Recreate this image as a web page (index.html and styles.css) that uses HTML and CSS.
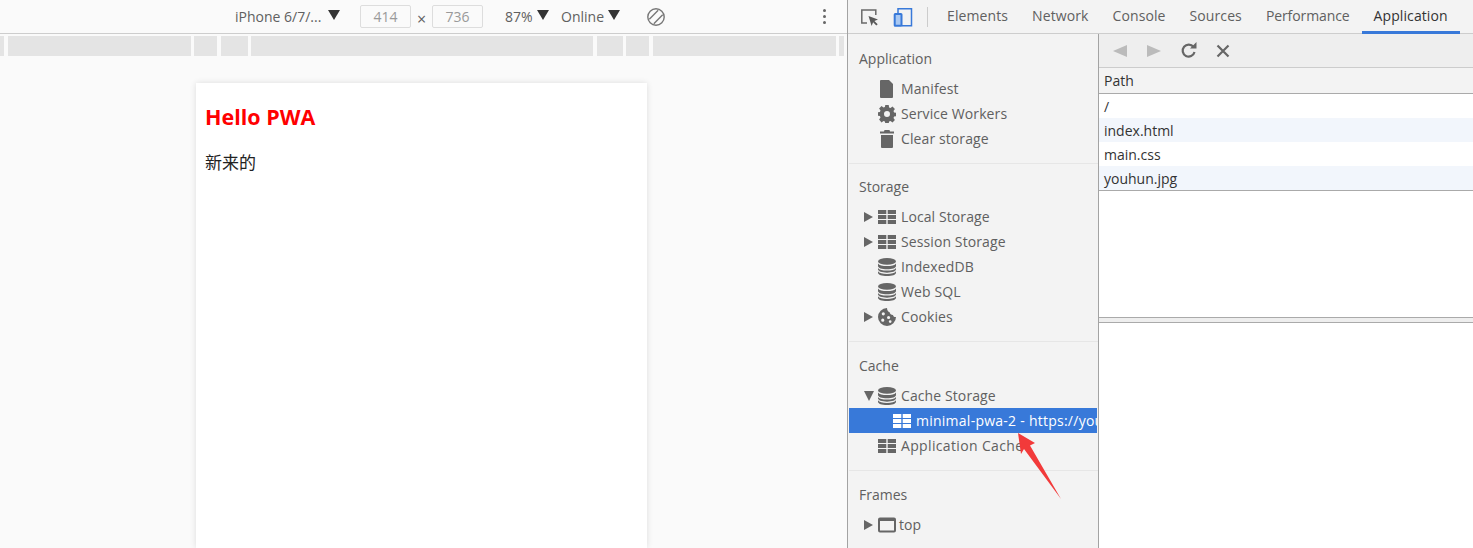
FILE: index.html
```html
<!DOCTYPE html>
<html lang="en">
<head>
    <meta charset="UTF-8">
    <title>Application - DevTools</title>
    <link rel="stylesheet" href="styles.css">
</head>
<body>
    <svg class="sprites" width="0" height="0">
        <symbol id="i-file" viewBox="0 0 18 18"><path d="M3 0h8l4 4v13a1 1 0 0 1-1 1H3a1 1 0 0 1-1-1V1a1 1 0 0 1 1-1z"/></symbol>
        <symbol id="i-gear" viewBox="0 0 18 18"><path fill-rule="evenodd" d="M7.3 0h3.4l.4 2.4 1.4.6 2-1.4 2.4 2.4-1.4 2 .6 1.4 1.9.4v3.4l-1.9.4-.6 1.4 1.4 2-2.4 2.4-2-1.4-1.4.6-.4 1.9H7.3l-.4-1.9-1.4-.6-2 1.4L1.100 14.500l1.4-2-.6-1.400L0 10.700V7.300l1.900-.4.6-1.400-1.400-2 2.400-2.400 2 1.400 1.400-.6zM9 6a3 3 0 1 0 0 6 3 3 0 0 0 0-6z"/></symbol>
        <symbol id="i-trash" viewBox="0 0 18 18"><path d="M6.500 0h5l.5 1.500h4V3.500H2V1.500h4zM3 5h12v12a1 1 0 0 1-1 1H4a1 1 0 0 1-1-1z"/></symbol>
        <symbol id="i-table" viewBox="0 0 18 14"><path d="M0 0h8.300v4H0zM9.700 0H18v4H9.700zM0 5h8.300v4H0zM9.700 5H18v4H9.700zM0 10h8.300v4H0zM9.700 10H18v4H9.700z"/></symbol>
        <symbol id="i-db" viewBox="0 0 16 16"><ellipse cx="8" cy="3" rx="8" ry="3"/><path d="M0 4.800c1 1.700 4 2.400 8 2.400s7-.7 8-2.400V7c0 1.700-3.500 3-8 3S0 8.700 0 7zM0 8.800c1 1.700 4 2.400 8 2.400s7-.7 8-2.400V10c0 1.700-3.500 3-8 3S0 11.700 0 10zM0 11.800C1 13.500 4 14.200 8 14.200s7-.7 8-2.400V13c0 1.700-3.500 3-8 3s-8-1.300-8-3z"/></symbol>
        <symbol id="i-cookie" viewBox="0 0 17 17"><path fill-rule="evenodd" d="M8.500 0a8.500 8.500 0 1 0 8.500 8.500c-1.500.3-2.600-.5-2.800-2C13 6.700 11 5.500 11 4 9.500 3.800 8.500 2 8.500 0zM5 4a1.500 1.500 0 1 1 0 3 1.500 1.500 0 0 1 0-3zm5 3.500a1.500 1.500 0 1 1 0 3 1.500 1.500 0 0 1 0-3zM4.500 10a1.500 1.500 0 1 1 0 3 1.500 1.500 0 0 1 0-3zm7 1.500a1.300 1.300 0 1 1 0 2.600 1.300 1.300 0 0 1 0-2.600z"/></symbol>
        <symbol id="i-frame" viewBox="0 0 18 15"><path fill-rule="evenodd" d="M2 0h14a2 2 0 0 1 2 2v11a2 2 0 0 1-2 2H2a2 2 0 0 1-2-2V2a2 2 0 0 1 2-2zm0 3.500V13h14V3.500z"/></symbol>
    </svg>

    <div class="device-pane">
        <div class="device-toolbar">
            <span class="tb-label tb-device">iPhone 6/7/...</span>
            <span class="tb-arrow"></span>
            <span class="dim-input dim-first">414</span>
            <span class="dim-x">×</span>
            <span class="dim-input">736</span>
            <span class="tb-label tb-zoom">87%</span>
            <span class="tb-arrow"></span>
            <span class="tb-label tb-online">Online</span>
            <span class="tb-arrow"></span>
            <svg class="tb-rotate" width="20" height="20" viewBox="0 0 20 20" fill="none" stroke="#777" stroke-width="1.400">
                <circle cx="10" cy="10" r="8.200"/>
                <path d="M3.300 12.200L12.200 3.300M7.800 16.700L16.700 7.800"/>
            </svg>
            <span class="tb-dots"><i></i><i></i><i></i></span>
        </div>
        <div class="ruler">
            <span class="seg w4"></span>
            <span class="seg w183"></span>
            <span class="seg w23"></span>
            <span class="seg w27"></span>
            <span class="seg w342"></span>
            <span class="seg w26"></span>
            <span class="seg w23"></span>
            <span class="seg w183"></span>
            <span class="seg w5"></span>
        </div>
        <div class="viewport">
            <div class="phone">
                <h1>Hello PWA</h1>
                <p>新来的</p>
            </div>
        </div>
    </div>

    <div class="devtools">
        <div class="tabbar">
            <svg class="ic-inspect" width="19" height="19" viewBox="0 0 19 19">
                <path d="M7 16H1.800V3h14v5" fill="none" stroke="#6a6a6a" stroke-width="1.500"/>
                <path d="M8.500 9l9.500 3.500-3.600 1.500 3.300 3.200-1.400 1.400-3.200-3.300-1.500 3.600z" fill="#5a5a5a"/>
            </svg>
            <svg class="ic-device" width="20" height="21" viewBox="0 0 20 21">
                <path d="M5 7V2.800h13.500v17H9" fill="none" stroke="#3879d9" stroke-width="1.500"/>
                <rect x="1.700" y="8" width="6.800" height="11.800" rx="0.500" fill="#a9c8f2" stroke="#3879d9" stroke-width="2"/>
            </svg>
            <span class="tab-sep"></span>
            <span class="tab">Elements</span>
            <span class="tab">Network</span>
            <span class="tab">Console</span>
            <span class="tab">Sources</span>
            <span class="tab tab-perf">Performance</span>
            <span class="tab active">Application</span>
        </div>
        <div class="panel">
            <div class="sidebar">
                <div class="sec sec-first">
                    <div class="sec-title">Application</div>
                    <div class="row"><span class="tw"></span><svg class="ico"><use href="#i-file"/></svg>Manifest</div>
                    <div class="row"><span class="tw"></span><svg class="ico"><use href="#i-gear"/></svg>Service Workers</div>
                    <div class="row"><span class="tw"></span><svg class="ico"><use href="#i-trash"/></svg>Clear storage</div>
                </div>
                <div class="sec">
                    <div class="sec-title">Storage</div>
                    <div class="row"><span class="tw closed"></span><svg class="ico"><use href="#i-table"/></svg>Local Storage</div>
                    <div class="row"><span class="tw closed"></span><svg class="ico"><use href="#i-table"/></svg>Session Storage</div>
                    <div class="row"><span class="tw"></span><svg class="ico"><use href="#i-db"/></svg>IndexedDB</div>
                    <div class="row"><span class="tw"></span><svg class="ico"><use href="#i-db"/></svg>Web SQL</div>
                    <div class="row"><span class="tw closed"></span><svg class="ico"><use href="#i-cookie"/></svg>Cookies</div>
                </div>
                <div class="sec sec-cache">
                    <div class="sec-title">Cache</div>
                    <div class="row"><span class="tw open"></span><svg class="ico"><use href="#i-db"/></svg>Cache Storage</div>
                    <div class="row selected"><svg class="ico"><use href="#i-table"/></svg>minimal-pwa-2 - https://you</div>
                    <div class="row row-appcache"><span class="tw"></span><svg class="ico"><use href="#i-table"/></svg>Application Cache</div>
                </div>
                <div class="sec sec-last">
                    <div class="sec-title">Frames</div>
                    <div class="row row-top"><span class="tw closed"></span><svg class="ico"><use href="#i-frame"/></svg>top</div>
                </div>
            </div>
            <div class="main">
                <div class="main-toolbar">
                    <span class="nav-back"></span>
                    <span class="nav-fwd"></span>
                    <svg class="ic-reload" width="17" height="17" viewBox="0 0 17 17" fill="none">
                        <path d="M13.500 5A6 6 0 1 0 14.500 10" stroke="#666" stroke-width="2.200"/>
                        <path d="M10 6.500h6.500V0z" fill="#666"/>
                    </svg>
                    <svg class="ic-close" width="14" height="14" viewBox="0 0 14 14">
                        <path d="M1.500 1.500l11 11M12.500 1.500l-11 11" stroke="#666" stroke-width="2.200"/>
                    </svg>
                </div>
                <div class="path-head">Path</div>
                <div class="path-list">
                    <div class="path-row">/</div>
                    <div class="path-row alt">index.html</div>
                    <div class="path-row">main.css</div>
                    <div class="path-row alt">youhun.jpg</div>
                </div>
                <div class="path-empty"></div>
                <div class="splitter"></div>
            </div>
        </div>
    </div>

    <svg class="annot-arrow" width="50" height="72" viewBox="0 0 50 72">
        <path d="M3 1l17 10-5 2.500L46 67 9 17 6 22z" fill="#f23a3a"/>
    </svg>
</body>
</html>
```

FILE: styles.css
```css
* {
    box-sizing: border-box;
}

html, body {
    height: 100%;
}

body {
    margin: 0;
    display: flex;
    height: 548px;
    overflow: hidden;
    position: relative;
    font-family: "Open Sans", "Noto Sans", sans-serif;
    font-size: 14px;
    color: #606060;
    background: #fff;
}

.sprites {
    position: absolute;
}

/* left side: emulated device */
.device-pane {
    width: 848px;
    flex: none;
    display: flex;
    flex-direction: column;
    background: #fafafa;
    border-right: 1px solid #a3a3a3;
}

.device-toolbar {
    height: 34px;
    flex: none;
    display: flex;
    align-items: center;
    border-bottom: 1px solid #cdcdcd;
    padding-left: 235px;
}

.tb-label {
    font-size: 14px;
    white-space: nowrap;
}

.tb-device {
    width: 89px;
}

.tb-arrow {
    width: 0;
    height: 0;
    margin: -3px 0 0 4px;
    border-left: 6px solid transparent;
    border-right: 6px solid transparent;
    border-top: 10px solid #333;
}

.dim-input {
    width: 51px;
    height: 23px;
    border: 1px solid #ddd;
    border-radius: 2px;
    background: #fafafa;
    color: #999;
    text-align: center;
    line-height: 21px;
}

.dim-first {
    margin-left: 20px;
}

.dim-x {
    width: 21px;
    text-align: center;
    font-size: 16px;
    padding-top: 4px;
}

.tb-zoom {
    width: 28px;
    margin-left: 22px;
}

.tb-online {
    width: 43px;
    margin-left: 12px;
}

.tb-rotate {
    margin-left: 26px;
}

.tb-dots {
    margin-left: 157px;
    display: flex;
    flex-direction: column;
    gap: 3px;
}

.tb-dots i {
    display: block;
    width: 3px;
    height: 3px;
    border-radius: 50%;
    background: #666;
}

.ruler {
    height: 20px;
    flex: none;
    margin-top: 2px;
    display: flex;
    gap: 3.500px;
}

.seg {
    background: #e4e4e4;
    display: block;
}

.w4 { width: 4px; }
.w5 { width: 5px; }
.w23 { width: 23px; }
.w26 { width: 26px; }
.w27 { width: 27px; }
.w183 { width: 183px; }
.w342 { width: 342px; }

.viewport {
    flex: 1;
    min-height: 0;
    padding: 27px 0 0 196px;
}

.phone {
    width: 451px;
    height: 100%;
    background: #fff;
    box-shadow: 0 0 6px rgba(0, 0, 0, 0.12);
    padding: 9px;
    color: #000;
    font-size: 16px;
}

.phone h1 {
    margin: 11px 0 0;
    font-size: 21.500px;
    line-height: 28px;
    font-weight: 700;
    color: #f00;
}

.phone p {
    margin: 19px 0 0;
    font-family: "Noto Sans CJK SC", sans-serif;
    font-size: 17px;
    line-height: 24px;
    color: #222;
}

/* right side: devtools */
.devtools {
    flex: 1;
    min-width: 0;
    display: flex;
    flex-direction: column;
}

.tabbar {
    height: 34px;
    flex: none;
    display: flex;
    align-items: center;
    background: #f3f3f3;
    border-bottom: 1px solid #cdcdcd;
    padding-left: 12px;
}

.ic-device {
    margin-left: 14px;
}

.tab-sep {
    width: 1px;
    height: 20px;
    margin: 0 7px 0 14px;
    background: #ccc;
}

.tab {
    height: 34px;
    line-height: 32px;
    padding: 0 12px;
    white-space: nowrap;
    letter-spacing: 0.100px;
}

.tab-perf {
    letter-spacing: -0.100px;
}

.tab.active {
    color: #333;
    border-bottom: 3px solid #3879d9;
}

.panel {
    flex: 1;
    min-height: 0;
    display: flex;
}

.sidebar {
    width: 251px;
    flex: none;
    background: #f3f3f3;
    border-right: 1px solid #a3a3a3;
    overflow: hidden;
    padding: 0 0 0 1px;
}

.sec {
    padding: 11px 0 12px;
    border-bottom: 1px solid #e6e6e6;
}

.sec-first {
    padding-top: 13px;
}

.sec-cache,
.sec-last {
    padding-top: 12px;
}

.sec-last {
    border-bottom: 0;
}

.sec-title {
    height: 24px;
    line-height: 24px;
    padding-left: 10px;
    margin-bottom: 5px;
}

.row {
    height: 25px;
    display: flex;
    align-items: center;
    padding-left: 15px;
    white-space: nowrap;
    overflow: hidden;
    letter-spacing: 0.100px;
}

.row-appcache {
    letter-spacing: 0.350px;
}

.tw {
    width: 14px;
    flex: none;
}

.tw.closed::before {
    content: "";
    display: block;
    width: 0;
    height: 0;
    border-top: 5px solid transparent;
    border-bottom: 5px solid transparent;
    border-left: 9px solid #666;
}

.tw.open::before {
    content: "";
    display: block;
    width: 0;
    height: 0;
    border-left: 5.500px solid transparent;
    border-right: 5.500px solid transparent;
    border-top: 10px solid #666;
}

.ico {
    width: 18px;
    height: 18px;
    flex: none;
    margin-right: 5px;
    fill: #666;
}

.row-top .ico {
    margin-right: 3px;
}

.row.selected {
    background: #3879d9;
    color: #fff;
    padding-left: 44px;
    margin-right: 1px;
    letter-spacing: 0.250px;
}

.row.selected .ico {
    fill: #fff;
}

.main {
    flex: 1;
    min-width: 0;
    display: flex;
    flex-direction: column;
    background: #fff;
}

.main-toolbar {
    height: 34px;
    flex: none;
    display: flex;
    align-items: center;
    background: #eee;
    border-bottom: 1px solid #ccc;
    padding-left: 14px;
}

.nav-back,
.nav-fwd {
    width: 0;
    height: 0;
    border-top: 6px solid transparent;
    border-bottom: 6px solid transparent;
}

.nav-back {
    border-right: 14px solid #bbb;
}

.nav-fwd {
    margin-left: 20px;
    border-left: 14px solid #bbb;
}

.ic-reload {
    margin-left: 19px;
}

.ic-close {
    margin-left: 19px;
}

.path-head {
    height: 26px;
    flex: none;
    line-height: 25px;
    padding-left: 5px;
    color: #333;
    background: #f3f3f3;
    border-bottom: 1px solid #aaa;
}

.path-list {
    flex: none;
    border-bottom: 1px solid #aaa;
}

.path-row {
    height: 24px;
    line-height: 26px;
    padding-left: 5px;
    color: #333;
}

.path-row.alt {
    background: #f2f6fc;
}

.path-empty {
    height: 126px;
    flex: none;
}

.splitter {
    height: 6px;
    flex: none;
    background: #eee;
    border-top: 1px solid #aaa;
    border-bottom: 1px solid #aaa;
}

.annot-arrow {
    position: absolute;
    left: 1015px;
    top: 432px;
}
```
